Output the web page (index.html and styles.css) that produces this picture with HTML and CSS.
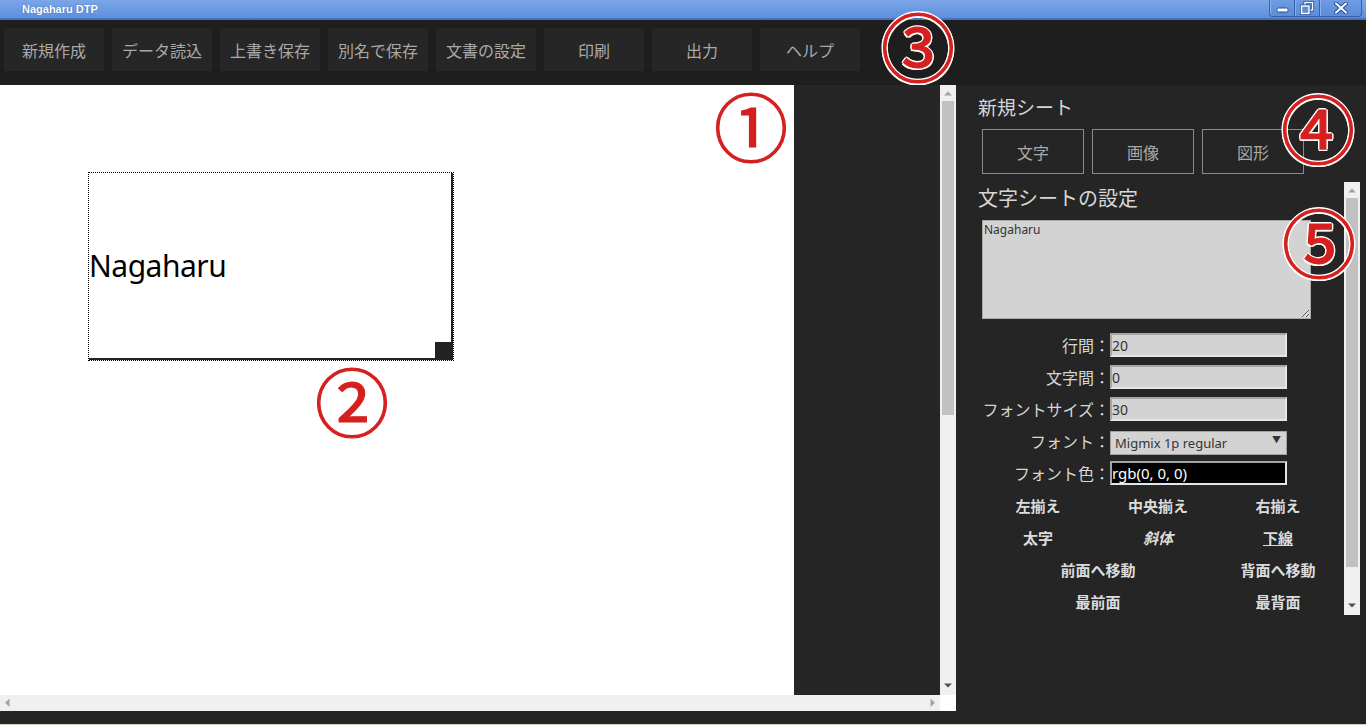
FILE: index.html
```html
<!DOCTYPE html>
<html lang="ja">
<head>
<meta charset="utf-8">
<title>Nagaharu DTP</title>
<link rel="stylesheet" href="styles.css">
</head>
<body>
<div class="app">
  <header class="titlebar">
    <span class="title">Nagaharu DTP</span>
    <div class="winbtns">
      <span class="wb min"><svg width="13" height="6" viewBox="0 0 13 6"><rect x="1" y="1" width="11" height="4" rx="1.5" fill="#fff" stroke="#2d4f8a" stroke-width="1"/></svg></span>
      <span class="wb restore"><svg width="14" height="14" viewBox="0 0 14 14"><rect x="5" y="1.5" width="7.5" height="7.5" fill="none" stroke="#2d4f8a" stroke-width="3"/><rect x="5" y="1.5" width="7.5" height="7.5" fill="none" stroke="#fff" stroke-width="1.4"/><rect x="1.5" y="5" width="7.5" height="7.5" fill="#5d8ddb" stroke="#2d4f8a" stroke-width="3"/><rect x="1.5" y="5" width="7.5" height="7.5" fill="#5d8ddb" stroke="#fff" stroke-width="1.4"/></svg></span>
      <span class="wb close"><svg width="14" height="12" viewBox="0 0 14 12"><path d="M2 1.5 L12 10.5 M12 1.5 L2 10.5" stroke="#2d4f8a" stroke-width="4" stroke-linecap="round"/><path d="M2 1.5 L12 10.5 M12 1.5 L2 10.5" stroke="#fff" stroke-width="2" stroke-linecap="round"/></svg></span>
    </div>
  </header>

  <nav class="toolbar">
    <button class="tb">新規作成</button>
    <button class="tb">データ読込</button>
    <button class="tb">上書き保存</button>
    <button class="tb">別名で保存</button>
    <button class="tb">文書の設定</button>
    <button class="tb">印刷</button>
    <button class="tb">出力</button>
    <button class="tb">ヘルプ</button>
  </nav>

  <main class="workspace">
    <section class="stage">
      <div class="viewport">
        <div class="page">
          <div class="sheet">
            <span class="sheet-text">Nagaharu</span>
            <i class="grip"></i>
          </div>
        </div>
      </div>
      <div class="vbar">
        <span class="sbtn"><svg width="16" height="16"><path d="M4 10.5 L12 10.5 L8 6.5 Z" fill="#a3a3a3"/></svg></span>
        <span class="track"><span class="thumb stage-thumb"></span></span>
        <span class="sbtn"><svg width="16" height="16"><path d="M4 4.5 L12 4.5 L8 8.5 Z" fill="#505050"/></svg></span>
      </div>
      <div class="hbar">
        <span class="sbtn"><svg width="16" height="16"><path d="M9.5 3.5 V12 L5 7.75 Z" fill="#a3a3a3"/></svg></span>
        <span class="track"></span>
        <span class="sbtn"><svg width="16" height="16"><path d="M6.5 3.5 V12 L11 7.75 Z" fill="#a3a3a3"/></svg></span>
      </div>
      <div class="corner"></div>
    </section>

    <aside class="panel">
      <h2 class="ph">新規シート</h2>
      <div class="newbtns">
        <button class="nb">文字</button>
        <button class="nb">画像</button>
        <button class="nb">図形</button>
      </div>

      <div class="settings">
        <div class="settings-body">
          <h2 class="ph">文字シートの設定</h2>
          <textarea class="txt">Nagaharu</textarea>
          <div class="form">
            <label class="row"><span class="lbl">行間：</span><input class="inp" value="20"></label>
            <label class="row"><span class="lbl">文字間：</span><input class="inp" value="0"></label>
            <label class="row"><span class="lbl">フォントサイズ：</span><input class="inp" value="30"></label>
            <label class="row"><span class="lbl">フォント：</span><span class="selwrap"><select class="sel"><option>Migmix 1p regular</option></select></span></label>
            <label class="row"><span class="lbl">フォント色：</span><input class="inp color" value="rgb(0, 0, 0)"></label>
          </div>
          <div class="actions">
            <button class="ab">左揃え</button>
            <button class="ab">中央揃え</button>
            <button class="ab">右揃え</button>
            <button class="ab">太字</button>
            <button class="ab it">斜体</button>
            <button class="ab ul">下線</button>
            <button class="ab wide">前面へ移動</button>
            <button class="ab">背面へ移動</button>
            <button class="ab wide">最前面</button>
            <button class="ab">最背面</button>
          </div>
        </div>
        <div class="vbar">
          <span class="sbtn"><svg width="16" height="16"><path d="M4 10.5 L12 10.5 L8 6.5 Z" fill="#a3a3a3"/></svg></span>
          <span class="track"><span class="thumb panel-thumb"></span></span>
          <span class="sbtn"><svg width="16" height="16"><path d="M4 4.5 L12 4.5 L8 8.5 Z" fill="#505050"/></svg></span>
        </div>
      </div>
    </aside>
  </main>

  <div class="marks" aria-hidden="true">
    <span class="mk m1">①</span>
    <span class="mk m2">②</span>
    <span class="mk m3">③</span>
    <span class="mk m4">④</span>
    <span class="mk m5">⑤</span>
  </div>
</div>
</body>
</html>
```

FILE: styles.css
```css
* { box-sizing: border-box; }

html, body {
  margin: 0;
  padding: 0;
}

body {
  background: #252525;
  font-family: "Noto Sans CJK JP", "Noto Sans", sans-serif;
  overflow: hidden;
}

button, input, select, textarea {
  font-family: inherit;
}

.app {
  position: relative;
  width: 1366px;
  height: 725px;
  display: grid;
  grid-template-rows: 20px 65px 1fr;
  border-bottom: 1px solid #d3cdc0;
}

/* ---------- title bar ---------- */
.titlebar {
  display: flex;
  justify-content: space-between;
  align-items: flex-start;
  background: linear-gradient(#7ba6e7, #5e8fdc);
  border-bottom: 2px solid #4471c2;
}

.title {
  font: bold 11px/18px "Liberation Sans", Arial, sans-serif;
  color: #fff;
  padding-left: 22px;
  text-shadow: 0 0 1px #2c4f8c;
}

.winbtns {
  display: flex;
  height: 17px;
  margin-right: 4px;
}

.wb {
  display: flex;
  align-items: center;
  justify-content: center;
  border: 1px solid #39609f;
  border-top: none;
  border-left: none;
  background: linear-gradient(#6f9ce3, #5b8cd9);
  box-shadow: inset 1px 0 0 #88b0ea;
}

.wb.min {
  width: 26px;
  border-left: 1px solid #39609f;
  border-radius: 0 0 0 4px;
  align-items: flex-end;
  padding-bottom: 3px;
}

.wb.restore { width: 25px; }

.wb.close {
  width: 42px;
  border-radius: 0 0 4px 0;
}

/* ---------- toolbar ---------- */
.toolbar {
  display: flex;
  gap: 8px;
  padding: 8px 4px 14px;
  background: #1e1e1e;
}

.tb {
  width: 100px;
  height: 43px;
  border: none;
  background: #262626;
  color: #a9a9a9;
  font-size: 16px;
  padding: 0;
}

/* ---------- workspace ---------- */
.workspace {
  display: flex;
  align-items: flex-start;
  min-height: 0;
}

.stage {
  width: 956px;
  height: 626px;
  flex: none;
  display: grid;
  grid-template-columns: 940px 16px;
  grid-template-rows: 610px 16px;
}

.viewport {
  overflow: hidden;
  background: #262626;
}

.page {
  position: relative;
  width: 794px;
  height: 1123px;
  background: #fff;
}

.sheet {
  position: absolute;
  left: 89px;
  top: 88px;
  width: 364px;
  height: 187px;
  display: flex;
  align-items: center;
  border-right: 2px solid #222;
  border-bottom: 2px solid #222;
  outline: 1px dotted #000;
}

.sheet-text {
  font-family: "Noto Sans", "Open Sans", sans-serif;
  font-size: 30px;
  color: #000;
  letter-spacing: -0.5px;
}

.grip {
  position: absolute;
  right: 0;
  bottom: 0;
  width: 16px;
  height: 16px;
  background: #222;
}

/* ---------- scrollbars (drawn) ---------- */
.vbar, .hbar {
  display: flex;
  background: #f0f0f0;
}

.vbar { flex-direction: column; }

.sbtn {
  flex: none;
  width: 16px;
  height: 16px;
  display: block;
}

.sbtn svg { display: block; }

.track {
  flex: 1;
  display: flex;
  flex-direction: column;
}

.thumb {
  display: block;
  margin: 0 2px;
  background: #c1c1c1;
}

.stage-thumb { height: 314px; }
.panel-thumb { height: 369px; }

.corner { background: #fff; }

/* ---------- right panel ---------- */
.panel {
  flex: 1;
  height: 100%;
  background: #252525;
  padding: 8px 6px 0 22px;
  display: flex;
  flex-direction: column;
}

.ph {
  margin: 0;
  font-size: 19px;
  font-weight: normal;
  line-height: 28px;
  color: #d6d6d6;
}

.newbtns {
  display: flex;
  gap: 8px;
  margin: 8px 0 8px 4px;
}

.nb {
  width: 102px;
  height: 45px;
  background: transparent;
  border: 1px solid #8a8a8a;
  color: #a9a9a9;
  font-size: 16px;
  padding: 0;
}

.settings {
  width: 382px;
  height: 433px;
  display: grid;
  grid-template-columns: 366px 16px;
}

.settings-body {
  overflow: hidden;
  padding-bottom: 33px;
}

.settings .ph {
  margin-top: 2px;
  font-size: 20px;
}

.txt {
  display: block;
  width: 329px;
  height: 99px;
  margin: 8px 0 14px 4px;
  background: #d3d3d3;
  border: 1px solid #a9a9a9;
  color: #333;
  font-family: "Noto Sans", sans-serif;
  font-size: 12px;
  line-height: 16px;
  padding: 1px 1px;
  resize: both;
}

.form {
  display: flex;
  flex-direction: column;
  gap: 8px;
}

.row {
  display: flex;
  height: 24px;
}

.lbl {
  width: 132px;
  text-align: right;
  color: #d6d6d6;
  font-size: 16px;
  line-height: 24px;
}

.inp, .selwrap {
  width: 177px;
  height: 24px;
}

.inp {
  background: #d3d3d3;
  border: 2px solid;
  border-color: #a6a6a6 #e6e6e6 #e6e6e6 #a6a6a6;
  color: #333;
  font-family: "Noto Sans", sans-serif;
  font-size: 14px;
  padding: 0;
  outline: none;
}

.inp.color {
  background: #000;
  color: #fff;
  font-size: 15px;
}

.selwrap {
  position: relative;
  display: block;
}

.sel {
  -webkit-appearance: none;
  appearance: none;
  width: 100%;
  height: 100%;
  background: #d3d3d3;
  border: 1px solid #a0a0a0;
  color: #333;
  font-family: "Noto Sans", sans-serif;
  font-size: 13px;
  padding: 0 0 0 4px;
  border-radius: 0;
}

.selwrap::after {
  content: "▼";
  position: absolute;
  right: 6px;
  top: 5px;
  font-size: 9px;
  line-height: 12px;
  color: #333;
  pointer-events: none;
}

.actions {
  display: grid;
  grid-template-columns: repeat(3, 120px);
  grid-auto-rows: 32px;
  margin-top: 4px;
}

.ab {
  background: none;
  border: none;
  padding: 0;
  color: #dcdcdc;
  font-size: 15px;
  font-weight: bold;
}

.ab.it { font-style: italic; }
.ab.ul { text-decoration: underline; }
.ab.wide { grid-column: span 2; }

/* ---------- annotation marks ---------- */
.marks {
  position: absolute;
  inset: 0;
  pointer-events: none;
}

.mk {
  position: absolute;
  font-family: "Noto Sans CJK JP", sans-serif;
  font-size: 74px;
  line-height: 88px;
  width: 80px;
  text-align: center;
  font-weight: normal;
  color: #d62020;
  -webkit-text-stroke: 1.2px #d62020;
  text-shadow:
    2px 0 0 #fff, -2px 0 0 #fff, 0 2px 0 #fff, 0 -2px 0 #fff,
    1.5px 1.5px 0 #fff, -1.5px 1.5px 0 #fff, 1.5px -1.5px 0 #fff, -1.5px -1.5px 0 #fff;
}

.m1 { left: 711px; top: 80px; }
.m2 { left: 312px; top: 355px; }
.m3 { left: 878px; top: 0px; }
.m4 { left: 1278px; top: 82px; }
.m5 { left: 1279px; top: 196px; }
```
